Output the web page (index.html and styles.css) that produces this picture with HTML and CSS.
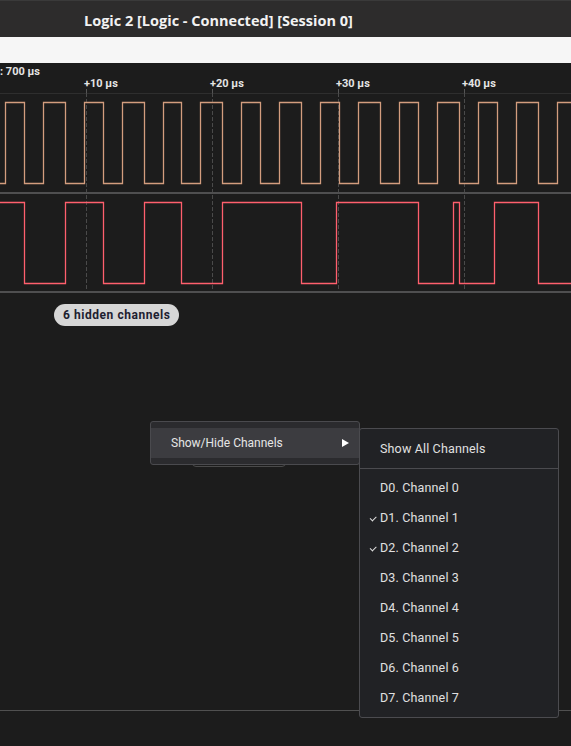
FILE: index.html
```html
<!DOCTYPE html>
<html lang="en">

<head>
    <meta charset="UTF-8">
    <meta name="viewport" content="width=device-width, initial-scale=1.0">
    <title>Logic 2</title>
    <link rel="stylesheet" href="styles.css">
</head>

<body>

    <div class="app">
        <div class="titlebar">
            <span class="title">Logic 2 [Logic - Connected] [Session 0]</span>
        </div>
        <div class="toolbar"></div>

        <div class="timeline">
            <div class="ruler">
                <span class="ruler-start">: 700 µs</span>
                <span class="tick" style="left: 84px">+10 µs</span>
                <span class="tick" style="left: 210px">+20 µs</span>
                <span class="tick" style="left: 336px">+30 µs</span>
                <span class="tick" style="left: 462px">+40 µs</span>
            </div>

            <svg class="waves" width="571" height="200" viewBox="0 0 571 200">
                <line class="row-top" x1="0" y1="0.5" x2="571" y2="0.5" />
                <g class="grid">
                    <line x1="86.5" y1="0" x2="86.5" y2="200" />
                    <line x1="212.5" y1="0" x2="212.5" y2="200" />
                    <line x1="338.5" y1="0" x2="338.5" y2="200" />
                    <line x1="464.5" y1="0" x2="464.5" y2="200" />
                </g>
                <!-- D1 -->
                <polyline class="wave wave-d1" points="0,90.5 5.5,90.5 5.5,9.5 24.5,9.5 24.5,90.5 43.5,90.5 43.5,9.5 65.5,9.5 65.5,90.5 84.5,90.5 84.5,9.5 103.5,9.5 103.5,90.5 122.5,90.5 122.5,9.5 144.5,9.5 144.5,90.5 163.5,90.5 163.5,9.5 181.5,9.5 181.5,90.5 200.5,90.5 200.5,9.5 222.5,9.5 222.5,90.5 241.5,90.5 241.5,9.5 260.5,9.5 260.5,90.5 279.5,90.5 279.5,9.5 301.5,9.5 301.5,90.5 320.5,90.5 320.5,9.5 339.5,9.5 339.5,90.5 358.5,90.5 358.5,9.5 380.5,9.5 380.5,90.5 399.5,90.5 399.5,9.5 418.5,9.5 418.5,90.5 437.5,90.5 437.5,9.5 459.5,9.5 459.5,90.5 478.5,90.5 478.5,9.5 497.5,9.5 497.5,90.5 516.5,90.5 516.5,9.5 538.5,9.5 538.5,90.5 557.5,90.5 557.5,9.5 571,9.5" />
                <line class="row-sep" x1="0" y1="100" x2="571" y2="100" />
                <!-- D2 -->
                <polyline class="wave wave-d2" points="0,109.5 24.5,109.5 24.5,190.5 65.5,190.5 65.5,109.5 103.5,109.5 103.5,190.5 144.5,190.5 144.5,109.5 181.5,109.5 181.5,190.5 222.5,190.5 222.5,109.5 301.5,109.5 301.5,190.5 336.5,190.5 336.5,109.5 418.5,109.5 418.5,190.5 453.5,190.5 453.5,109.5 459.5,109.5 459.5,190.5 494.5,190.5 494.5,109.5 538.5,109.5 538.5,190.5 571,190.5" />
                <line class="row-sep" x1="0" y1="199" x2="571" y2="199" />
            </svg>

            <div class="hidden-pill">6 hidden channels</div>
        </div>

        <div class="footer"></div>
    </div>

    <!-- context menu -->
    <div class="ghost-btn"></div>
    <div class="menu">
        <div class="menu-item active">
            <span>Show/Hide Channels</span>
            <span class="arrow"></span>
        </div>
    </div>

    <div class="submenu">
        <div class="submenu-head">Show All Channels</div>
        <div class="submenu-list">
            <div class="channel">D0. Channel 0</div>
            <div class="channel checked">D1. Channel 1</div>
            <div class="channel checked">D2. Channel 2</div>
            <div class="channel">D3. Channel 3</div>
            <div class="channel">D4. Channel 4</div>
            <div class="channel">D5. Channel 5</div>
            <div class="channel">D6. Channel 6</div>
            <div class="channel">D7. Channel 7</div>
        </div>
    </div>

</body>

</html>
```

FILE: styles.css
```css
body {
    margin: 0;
    background-color: #1c1c1c;
    font-family: Roboto, "Liberation Sans", sans-serif;
    overflow: hidden;
}

.app {
    display: flex;
    flex-direction: column;
    width: 571px;
    height: 746px;
}

.titlebar {
    height: 37px;
    background-color: #2d2c2c;
    border-top: 1px solid #3a3a3a;
    box-sizing: border-box;
    display: flex;
    align-items: center;
    padding: 2px 0 0 84px;
}

.title {
    font-family: "Open Sans", sans-serif;
    font-weight: 700;
    font-size: 14.5px;
    color: #f2f2f2;
}

.toolbar {
    height: 26px;
    background-color: #f6f6f6;
}

.timeline {
    flex: 1;
}

.ruler {
    position: relative;
    height: 30px;
    font-size: 11px;
    font-weight: 700;
    color: #e4e4e4;
}

.ruler-start {
    position: absolute;
    left: 0;
    top: 2px;
}

.tick {
    position: absolute;
    top: 14px;
}

.tick::after {
    content: "";
    position: absolute;
    left: 2px;
    top: 12px;
    height: 4px;
    border-left: 1px solid #555;
}

.waves {
    display: block;
}

.row-top {
    stroke: #2e2e2e;
    stroke-width: 1;
}

.grid line {
    stroke: #4a4a4a;
    stroke-width: 1;
    stroke-dasharray: 4 2;
}

.row-sep {
    stroke: #4f4f50;
    stroke-width: 2;
}

.wave {
    fill: none;
    stroke-width: 1.3;
}

.wave-d1 {
    stroke: #d39d7e;
}

.wave-d2 {
    stroke: #ff5f6d;
}

.hidden-pill {
    display: inline-block;
    margin: 11px 0 0 54px;
    height: 22px;
    line-height: 22px;
    padding: 0 9px;
    border-radius: 11px;
    background-color: #d6d6d6;
    color: #1d2030;
    font-size: 12px;
    font-weight: 700;
    letter-spacing: 0.55px;
}

.footer {
    height: 35px;
    border-top: 1px solid #505050;
}

.ghost-btn {
    position: absolute;
    left: 192px;
    top: 445px;
    width: 92px;
    height: 20px;
    border: 1px solid #4a4a4a;
    border-radius: 4px;
}

.menu {
    position: absolute;
    left: 150px;
    top: 421px;
    width: 208px;
    padding: 6px 0;
    background-color: #2b2b2e;
    border: 1px solid #4a4a4e;
    border-radius: 3px;
}

.menu-item {
    display: flex;
    justify-content: space-between;
    align-items: center;
    height: 30px;
    padding: 0 10px 0 20px;
    font-size: 12px;
    color: #e6e6e6;
}

.menu-item.active {
    background-color: #3c3c40;
}

.arrow {
    width: 0;
    height: 0;
    border-top: 4px solid transparent;
    border-bottom: 4px solid transparent;
    border-left: 7px solid #ffffff;
}

.submenu {
    position: absolute;
    left: 359px;
    top: 428px;
    width: 198px;
    background-color: #212225;
    border: 1px solid #4b4b4f;
    border-radius: 3px;
    font-size: 12.5px;
    letter-spacing: 0.15px;
    color: #e0e0e0;
}

.submenu-head {
    height: 39px;
    line-height: 39px;
    padding-left: 20px;
    border-bottom: 1px solid #4b4b4f;
}

.submenu-list {
    padding: 4px 0 4px;
}

.channel {
    position: relative;
    height: 30px;
    line-height: 30px;
    padding-left: 20px;
}

.channel.checked::before {
    content: "";
    position: absolute;
    left: 10px;
    top: 13px;
    width: 5px;
    height: 2.5px;
    border-left: 1.5px solid #e0e0e0;
    border-bottom: 1.5px solid #e0e0e0;
    transform: rotate(-45deg);
}
```
